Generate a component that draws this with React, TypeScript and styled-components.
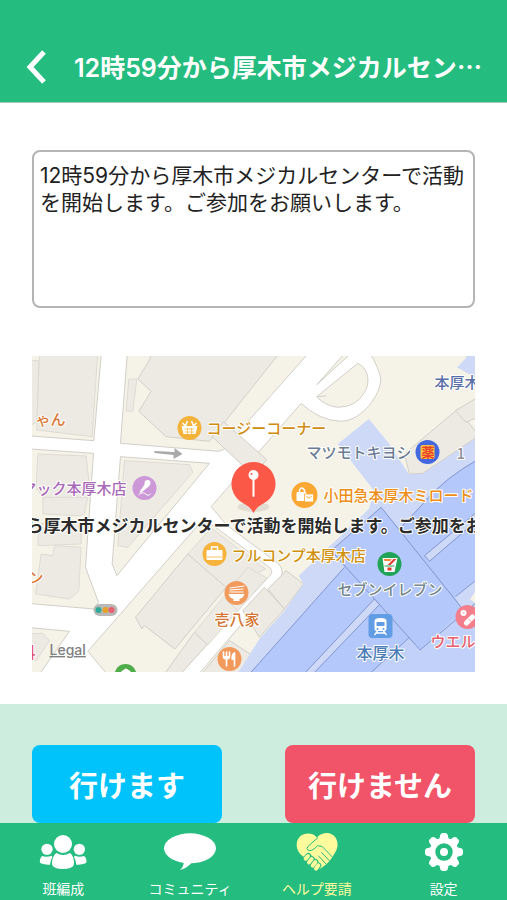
import React from 'react';
import styled, { createGlobalStyle } from 'styled-components';

const GlobalStyle = createGlobalStyle`
  * { box-sizing: border-box; }
  body {
    margin: 0;
    background: #fff;
    font-family: Inter, "Noto Sans CJK JP", sans-serif;
  }
`;

const Screen = styled.div`
  display: flex;
  flex-direction: column;
  min-height: 100vh;
`;

const Header = styled.header`
  display: flex;
  align-items: center;
  gap: 28px;
  padding: 42px 16px 10px 26px;
  height: 103px;
  background: #25bc80;
  border-bottom: 1px solid #a3c9b8;
`;

const BackButton = styled.button`
  display: flex;
  flex: none;
  padding: 0;
  border: 0;
  background: none;
  cursor: pointer;
`;

const Title = styled.h1`
  flex: 1;
  margin: 0;
  overflow: hidden;
  color: #fff;
  font-size: 25px;
  line-height: 40px;
  font-weight: 600;
  white-space: nowrap;
`;

const Ellipsis = styled.span`
  font-family: "Noto Sans CJK JP", sans-serif;
`;

const Main = styled.main`
  display: flex;
  flex: 1;
  flex-direction: column;
  gap: 48px;
  padding: 47px 32px 32px;
`;

const Message = styled.textarea`
  display: block;
  width: 100%;
  height: 158px;
  padding: 10px 6px;
  border: 2px solid #b4b4b4;
  border-radius: 8px;
  background: #fff;
  color: #222;
  font-family: inherit;
  font-size: 21px;
  line-height: 27px;
  resize: none;
  outline: none;
`;

const MapView = styled.svg`
  display: block;
  width: 100%;
  height: 316px;
`;

const Label = styled.text<{ $size?: number; $weight?: number; $halo?: string }>`
  font-family: "Noto Sans CJK JP", sans-serif;
  font-size: ${(p) => p.$size ?? 15}px;
  font-weight: ${(p) => p.$weight ?? 500};
  paint-order: stroke;
  stroke: ${(p) => p.$halo ?? '#fffffb'};
  stroke-width: 2px;
  stroke-linejoin: round;
`;

const LegalLink = styled.text`
  font-family: Inter, sans-serif;
  font-size: 14px;
  font-weight: 500;
  fill: #808080;
  text-decoration: underline;
`;

const Actions = styled.section`
  display: flex;
  justify-content: space-between;
  gap: 63px;
  padding: 41px 32px 0;
  background: #cdeedf;
`;

const ActionButton = styled.button<{ $color: string }>`
  flex: 1;
  height: 78px;
  padding: 0;
  border: 0;
  border-radius: 8px;
  background: ${(p) => p.$color};
  color: #fff;
  font-family: inherit;
  font-size: 29px;
  font-weight: 700;
  white-space: nowrap;
  cursor: pointer;
`;

const TabBar = styled.nav`
  display: grid;
  grid-template-columns: repeat(4, 1fr);
  height: 77px;
  background: #25bc80;
`;

const Tab = styled.button<{ $active?: boolean }>`
  display: flex;
  flex-direction: column;
  align-items: center;
  gap: 7px;
  padding: 9px 0 0;
  border: 0;
  background: none;
  color: ${(p) => (p.$active ? '#fdfb9c' : '#fff')};
  font-family: inherit;
  cursor: pointer;
`;

const TabLabel = styled.span`
  font-size: 14px;
  line-height: 20px;
  font-weight: 400;
`;

const GREEN = '#25bc80';

function BackIcon() {
  return (
    <svg width="20" height="34" viewBox="0 0 20 34" fill="none" stroke="#fff" strokeWidth="5" aria-hidden="true">
      <path d="M18 2 L4 17 L18 32" />
    </svg>
  );
}

function PeopleIcon() {
  return (
    <svg width="50" height="40" viewBox="111 36 150 120" fill="currentColor" aria-hidden="true">
      <circle cx="138" cy="88" r="17" />
      <circle cx="235" cy="88" r="17" />
      <path d="M124 108 Q137 113 151 107 Q154 109 154 112 Q148 120 147 134 Q131 135 119 130 Q115 127 117 119 Q119 110 124 108Z" />
      <path d="M249 108 Q236 113 222 107 Q219 109 219 112 Q225 120 226 134 Q242 135 254 130 Q258 127 256 119 Q254 110 249 108Z" />
      <circle cx="186" cy="72" r="27" />
      <path d="M166 99 Q186 111 207 99 Q213 102 217 114 Q221 128 218 136 Q213 147 186 147 Q159 147 154 136 Q151 128 156 113 Q160 102 166 99Z" />
    </svg>
  );
}

function BubbleIcon() {
  return (
    <svg width="54" height="40" viewBox="489 36 162 120" fill="currentColor" aria-hidden="true">
      <ellipse cx="570" cy="85" rx="78" ry="45" />
      <path d="M551 122 Q552 140 540 150 Q563 145 579 124Z" />
    </svg>
  );
}

function HandshakeHeartIcon() {
  return (
    <svg width="42" height="40" viewBox="127 36 126 120" fill="currentColor" aria-hidden="true">
      <path d="M190 53 C178 34 129 33 129 77 C130 91 138 102 148 109 L188 146 L196 148 L206 142 L216 134 L227 124 L236 112 L244 98 C262 70 246 38 218 39 C205 40 196 45 190 53Z" />
      <g stroke={GREEN} strokeWidth="18" strokeLinecap="round">
        <path d="M164 108 L157 116 M174 117 L166 127 M185 126 L177 137 M194 136 L187 146" />
      </g>
      <g stroke="currentColor" strokeWidth="12" strokeLinecap="round">
        <path d="M163 108 L156 116 M174 117 L166 127 M185 126 L177 137 M194 136 L187 146" />
      </g>
      <g stroke={GREEN} strokeWidth="3" fill="none" strokeLinecap="round" strokeLinejoin="round">
        <path d="M192 54 L164 78 Q156 86 164 91 Q172 94 181 87 L192 77 L206 80 L236 111" />
        <path d="M204 98 L227 122 M195 108 L216 131" />
      </g>
    </svg>
  );
}

function GearIcon() {
  return (
    <svg width="40" height="40" viewBox="-60 -60 120 120" fill="currentColor" aria-hidden="true">
      {[0, 45, 90, 135, 180, 225, 270, 315].map((a) => (
        <path key={a} transform={`rotate(${a})`} d="M-15 -35 L-11 -52 Q-9 -57 -4 -57 L4 -57 Q9 -57 11 -52 L15 -35Z" />
      ))}
      <circle r="43" />
      <circle r="26" fill={GREEN} />
      <circle r="12" />
    </svg>
  );
}

function Streets() {
  return (
    <g strokeLinejoin="round" strokeWidth="3">
      <rect width="1344" height="960" fill="#fff" />
      <g fill="#f5f2e8" stroke="#d2cfc8">
        <path d="M-9 -9 H216 L193 260 L-9 245Z" />
        <path d="M294 -9 L273 268 L568 292 Q580 290 590 280 L630 231 L843 -9Z" />
        <path d="M-9 284 L192 298 L168 640 L207 745 L193 765 L-9 748Z" />
        <path d="M273 308 L540 328 L262 665 L248 630Z" />
        <path d="M-9 820 L120 832 L24 969 H-9Z" />
        <path d="M175 892 L500 520 Q528 498 556 518 L722 642 Q732 652 722 664 L560 840 L445 969 H240Z" />
        <path d="M545 458 L815 148 Q870 200 935 202 C1000 200 1054 120 1054 75 Q1050 45 1018 -9 H1353 V969 H500 L752 676 Q766 652 748 630 L590 512Z" />
        <path d="M862 128 L985 28 C1020 45 1022 90 1005 115 Q980 160 925 160 Q885 155 862 128Z M862 128 L890 126" />
        <path d="M862 92 L952 -9 H972Z" />
      </g>
      <g fill="#edeae3" stroke="#dedbd4">
        <path d="M30 -9 H205 L188 248 L22 228Z" />
        <path d="M0 20 H28 L22 205 L0 215Z" />
        <path d="M365 -9 L362 15 L325 75 L365 112 L328 172 L410 248 L540 262 L585 205 L755 -9Z" stroke="#d2cfc8" />
        <path d="M298 75 H322 L310 172 H290Z" />
        <path d="M25 300 L170 306 L180 400 L165 480 L150 485 L40 480 V430 L20 400Z M40 430 H178" />
        <path d="M28 510 L155 500 V570 L25 575Z" />
        <path d="M35 600 L70 605 L75 575 L155 580 L148 710 L120 735 L18 720Z" />
        <path d="M285 320 L480 332 L490 355 L295 580 L265 575Z" />
        <path d="M-9 840 L40 838 L60 860 L20 920 H-9Z" />
        <path d="M475 600 L545 522 L708 645 L590 705Z" />
        <path d="M318 790 L475 600 L590 700 L436 885 L345 815 L337 825Z" stroke="#d2cfc8" />
        <path d="M495 835 L655 640 L712 672 L535 873Z M588 735 L625 770" />
        <path d="M405 960 L495 835 L533 872 L452 962Z" stroke="#d2cfc8" />
        <path d="M715 705 L770 650 L822 690 L765 765Z M640 770 L705 700 L765 765 L690 850Z" stroke="#d2cfc8" />
        <path d="M525 950 L600 860 L670 905 L622 969 H510Z" stroke="#d2cfc8" />
        <path d="M548 248 L582 203 L712 317 L688 345 L640 335Z" stroke="#d2cfc8" />
      </g>
    </g>
  );
}

function Station() {
  return (
    <g strokeLinejoin="round" strokeWidth="3">
      <g fill="#cdd9f7">
        <path d="M1018 195 L1080 270 L1138 360 L1180 358 L1353 240 V969 H618 L690 855 L765 770 L822 690 L808 665 L1018 465 L1035 412 L925 270Z" />
        <path d="M1283 40 L1310 12 V-9 H1353 V80Z" />
      </g>
      <path fill="#b4c8fc" d="M652 969 L945 640 L905 590 L1055 460 L1110 525 L1180 450 Q1240 375 1353 312 V665 L1275 730 L1300 770 L1172 888 L1140 850 L1010 969Z" />
      <path fill="#c1d1fa" d="M1140 850 L1172 888 L1300 770 L1353 740 V969 H1010Z" />
      <g fill="none" stroke="#8296ce">
        <path d="M652 969 L945 640 M905 590 L1055 460 L1302 768 M905 590 L1172 888 L1353 735 M1010 969 L1140 850 M1278 728 L1353 668" />
        <path d="M1110 525 L1180 450 Q1240 375 1353 312" />
      </g>
      <g fill="#cdd9f7" stroke="#8296ce">
        <path d="M815 969 L1035 735 L1050 752 L842 969Z" />
        <path d="M1185 605 L1353 465 V490 L1200 622Z" />
      </g>
      <g fill="#edeae3" stroke="#d2cfc8">
        <path d="M1125 300 L1285 165 L1344 240 V248 L1180 358 L1140 360Z" />
        <path d="M1278 170 L1353 125 V185 L1310 205Z" />
      </g>
      <path fill="#f5f2e8" d="M1322 735 L1353 690 V760Z" />
    </g>
  );
}

function Pois() {
  return (
    <g fill="#fff">
      <g transform="translate(190 428)">
        <circle r="12" fill="#f3b33b" />
        <path d="M-8 -2 H8 L6 6 H-6Z" />
        <path d="M-7 -5 L-3 -1 M7 -5 L3 -1 M-2 -7 L-4 -2 M2 -7 L4 -2" stroke="#fff" strokeWidth="1.5" />
        <path d="M-5 1 H5 M-5 4 H5 M-2 0 V6 M2 0 V6" stroke="#f3b33b" strokeWidth="0.7" />
      </g>
      <g transform="translate(145 488)">
        <circle r="12" fill="#cd98d7" />
        <circle cx="3" cy="-5" r="3" />
        <path d="M1 -5 L5 -2 L-4 5 L-5 4Z" />
        <path d="M-6 7 Q-2 3 1 6 T6 6" fill="none" stroke="#fff" />
      </g>
      <g transform="translate(428 452)">
        <circle r="12" fill="#4267de" />
        <rect x="-7" y="-7" width="14" height="14" rx="2" fill="#ffbf3e" />
        <Label $size={13} $weight={700} $halo="none" x="-6" y="5" fill="#e8412c">薬</Label>
      </g>
      <g transform="translate(305 495)">
        <circle r="13" fill="#fba733" />
        <rect x="-8" y="-3" width="10" height="9" rx="1" />
        <path d="M-5 -3 V-5 Q-3 -9 0 -5 V-3" fill="none" stroke="#fff" strokeWidth="1.5" />
        <path d="M0 -1 H9 V6 Q9 7 8 7 H1 Q0 7 0 6Z" stroke="#fba733" strokeWidth="0.8" />
        <path d="M2 1 Q4 5 7 1" fill="none" stroke="#fba733" />
      </g>
      <g transform="translate(215 554)">
        <circle r="12" fill="#f7b33c" />
        <rect x="-8" y="-4" width="16" height="10" rx="1" />
        <path d="M-3 -4 V-7 H3 V-4" fill="none" stroke="#fff" strokeWidth="1.5" />
        <path d="M-8 3 H8" stroke="#f7b33c" strokeWidth="0.8" />
      </g>
      <g transform="translate(237 593)">
        <circle r="12" fill="#f29a5c" />
        <path d="M-8 1 H8 Q7 5 3 6 V8 H-3 V6 Q-7 5 -8 1Z" />
        <path d="M-7 -1 H7 M-7 -3 L7 -4 M-7 -5 L8 -7" stroke="#fff" strokeWidth="1" />
      </g>
      <g transform="translate(230 659)">
        <circle r="12" fill="#f29a5c" />
        <path d="M-6 -7 V-3 Q-6 0 -3 0 Q0 0 0 -3 V-7 M-3 -7 V7 M5 7 V-6" fill="none" stroke="#fff" strokeWidth="1.6" strokeLinecap="round" />
        <path d="M5 -7 Q1 -5 2 1 H5Z" />
        <path d="M-6 -3 H0 V-1 L-3 0 L-6 -1Z" />
      </g>
      <g transform="translate(390 564)">
        <circle r="12" fill="#21a457" />
        <path d="M-7 -6 H8 L5 8 H-5Z" />
        <path d="M-6 -5 H2 L1 -3 H-5Z" fill="#f08a3a" />
        <path d="M4 -5 H7 L1 1 H-2Z" fill="#e33d33" />
        <path d="M-5 2 H5" stroke="#21a457" strokeWidth="1" />
        <path d="M-2 5 H2" stroke="#e33d33" strokeWidth="3" />
      </g>
      <g transform="translate(381 626)">
        <rect x="-12" y="-12" width="24" height="24" rx="4" fill="#619de4" />
        <path d="M-6 -5 Q-6 -8 0 -8 T6 -5 V3 Q6 5 4 5 H-4 Q-6 5 -6 3Z" />
        <path d="M-4 -4 H4 V0 H-4Z" fill="#619de4" />
        <path d="M-3 5 L-6 9 M3 5 L6 9 M-4 7 H4" stroke="#fff" strokeWidth="1.3" />
        <circle cx="-3" cy="3" r="1" fill="#619de4" />
        <circle cx="3" cy="3" r="1" fill="#619de4" />
      </g>
      <g transform="translate(468 617)">
        <circle r="12" fill="#f37f8d" />
        <circle cx="-4" cy="-4" r="3" />
        <path d="M-1 6 L5 0" stroke="#fff" strokeWidth="5" strokeLinecap="round" />
        <path d="M-5 -4 H-3 M1 2 L4 5" stroke="#f37f8d" strokeWidth="0.8" />
      </g>
      <g transform="translate(126 675)">
        <circle r="11" fill="#4fac4a" />
        <path d="M-5 -1 Q-5 -4 -2 -5 Q0 -8 3 -5 Q6 -4 5 -1Z" />
      </g>
      <g>
        <rect x="94" y="604" width="24" height="12" rx="6" fill="#b9b8b6" />
        <circle cx="99" cy="610" r="3" fill="#2eaa9b" />
        <circle cx="106" cy="610" r="3" fill="#e5a22d" />
        <circle cx="112" cy="610" r="3" fill="#e85f70" />
      </g>
      <path d="M155 451 L175 452 V448 L183 454 L174 459 V455 L155 453Z" fill="#aaa9a9" />
    </g>
  );
}

function MapPin() {
  return (
    <g>
      <ellipse cx="254" cy="507" rx="16" ry="5" fill="#7d6960" opacity="0.15" />
      <path d="M254 513 Q251 507 245 504 A22 22 0 1 1 263 504 Q257 507 254 513Z" fill="#fc5847" />
      <path d="M254 478 V496" stroke="#fff" strokeWidth="2" strokeLinecap="round" />
      <circle cx="254" cy="475" r="5" fill="#fff" />
      <circle cx="252" cy="474" r="1" fill="#fc5847" />
    </g>
  );
}

function AreaMap() {
  return (
    <MapView viewBox="32 356 444 316" preserveAspectRatio="xMidYMid slice" role="img" aria-label="地図">
      <g transform="translate(30 354) scale(0.3333)">
        <Streets />
        <Station />
      </g>
      <Pois />
      <Label x="36" y="425" fill="#d97838">ゃん</Label>
      <Label x="207" y="434" fill="#d08b12">コージーコーナー</Label>
      <Label x="22" y="494" fill="#a868b8">マック本厚木店</Label>
      <Label x="307" y="458" fill="#6b7b94">マツモトキヨシ</Label>
      <Label x="324" y="501" fill="#ec8d16">小田急本厚木ミロード</Label>
      <Label x="435" y="388" fill="#596fa9">本厚木</Label>
      <Label x="457" y="459" fill="#8d9098">1</Label>
      <Label x="232" y="561" fill="#d0900f">フルコンプ本厚木店</Label>
      <Label x="338" y="595" fill="#74868f">セブンイレブン</Label>
      <Label x="215" y="625" fill="#d47535">壱八家</Label>
      <Label $size={16} x="357" y="659" fill="#4c7db8">本厚木</Label>
      <Label x="431" y="647" fill="#e36070">ウエル</Label>
      <Label x="29" y="583" fill="#d97838">ン</Label>
      <Label x="21" y="658" fill="#e3506a">科</Label>
      <LegalLink x="50" y="655">Legal</LegalLink>
      <MapPin />
      <Label $size={17} $weight={700} x="27" y="532" fill="#2b2b2b">ら厚木市メジカルセンターで活動を開始します。ご参加をお</Label>
    </MapView>
  );
}

const tabs = [
  { label: '班編成', Icon: PeopleIcon },
  { label: 'コミュニティ', Icon: BubbleIcon },
  { label: 'ヘルプ要請', Icon: HandshakeHeartIcon, active: true },
  { label: '設定', Icon: GearIcon },
];

export default function App() {
  return (
    <Screen lang="ja">
      <GlobalStyle />
      <Header>
        <BackButton type="button" aria-label="戻る">
          <BackIcon />
        </BackButton>
        <Title>
          12時59分から厚木市メジカルセン<Ellipsis>…</Ellipsis>
        </Title>
      </Header>
      <Main>
        <Message
          readOnly
          aria-label="メッセージ"
          defaultValue="12時59分から厚木市メジカルセンターで活動を開始します。ご参加をお願いします。"
        />
        <AreaMap />
      </Main>
      <Actions>
        <ActionButton type="button" $color="#00c3fb">行けます</ActionButton>
        <ActionButton type="button" $color="#f15368">行けません</ActionButton>
      </Actions>
      <TabBar>
        {tabs.map(({ label, Icon, active }) => (
          <Tab key={label} type="button" $active={active} aria-current={active ? 'page' : undefined}>
            <Icon />
            <TabLabel>{label}</TabLabel>
          </Tab>
        ))}
      </TabBar>
    </Screen>
  );
}
